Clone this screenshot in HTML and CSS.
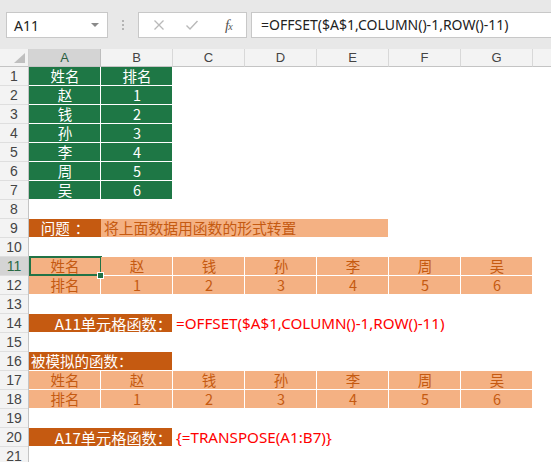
FILE: index.html
```html
<!DOCTYPE html>
<html>
<head>
<meta charset="utf-8">
<link rel="stylesheet" href="styles.css">
</head>
<body>
<div class="topbar">
  <div class="namebox"><span class="nb-text">A11</span><span class="dd"></span></div>
  <div class="sep"><i></i><i></i><i></i></div>
  <div class="fbtns">
    <svg class="ico" width="12" height="12" viewBox="0 0 12 12"><path d="M1.5 1.5 L10.5 10.5 M10.5 1.5 L1.5 10.5" stroke="#b9b9b9" stroke-width="1.3" fill="none"/></svg>
    <svg class="ico" width="14" height="12" viewBox="0 0 14 12"><path d="M1.5 6.5 L5 10 L12.5 2" stroke="#b9b9b9" stroke-width="1.4" fill="none"/></svg>
    <span class="fx">f<sub>x</sub></span>
  </div>
  <div class="finput">=OFFSET($A$1,COLUMN()-1,ROW()-11)</div>
</div>
<div class="sheet">
  <div class="row hdr">
    <div class="corner"><span class="tri"></span></div>
    <div class="ch sel">A</div><div class="ch">B</div><div class="ch">C</div><div class="ch">D</div><div class="ch">E</div><div class="ch">F</div><div class="ch">G</div><div class="ch last"></div>
  </div>
  <div class="row"><div class="rh">1</div><div class="c g">姓名</div><div class="c g">排名</div></div>
  <div class="row"><div class="rh">2</div><div class="c g">赵</div><div class="c g">1</div></div>
  <div class="row"><div class="rh">3</div><div class="c g">钱</div><div class="c g">2</div></div>
  <div class="row"><div class="rh">4</div><div class="c g">孙</div><div class="c g">3</div></div>
  <div class="row"><div class="rh">5</div><div class="c g">李</div><div class="c g">4</div></div>
  <div class="row"><div class="rh">6</div><div class="c g">周</div><div class="c g">5</div></div>
  <div class="row"><div class="rh">7</div><div class="c g">吴</div><div class="c g">6</div></div>
  <div class="row"><div class="rh">8</div></div>
  <div class="row"><div class="rh">9</div><div class="c do q">问题<span class="colon">：</span></div><div class="c lo s4 left">将上面数据用函数的形式转置</div></div>
  <div class="row"><div class="rh">10</div></div>
  <div class="row"><div class="rh rsel">11</div><div class="c lo active">姓名<span class="handle"></span></div><div class="c lo">赵</div><div class="c lo">钱</div><div class="c lo">孙</div><div class="c lo">李</div><div class="c lo">周</div><div class="c lo">吴</div></div>
  <div class="row"><div class="rh">12</div><div class="c lo">排名</div><div class="c lo">1</div><div class="c lo">2</div><div class="c lo">3</div><div class="c lo">4</div><div class="c lo">5</div><div class="c lo">6</div></div>
  <div class="row"><div class="rh">13</div></div>
  <div class="row"><div class="rh">14</div><div class="c do s2 right">A11单元格函数：</div><div class="c red rest">=OFFSET($A$1,COLUMN()-1,ROW()-11)</div></div>
  <div class="row"><div class="rh">15</div></div>
  <div class="row"><div class="rh">16</div><div class="c do s2 left w">被模拟的函数：</div></div>
  <div class="row"><div class="rh">17</div><div class="c lo">姓名</div><div class="c lo">赵</div><div class="c lo">钱</div><div class="c lo">孙</div><div class="c lo">李</div><div class="c lo">周</div><div class="c lo">吴</div></div>
  <div class="row"><div class="rh">18</div><div class="c lo">排名</div><div class="c lo">1</div><div class="c lo">2</div><div class="c lo">3</div><div class="c lo">4</div><div class="c lo">5</div><div class="c lo">6</div></div>
  <div class="row"><div class="rh">19</div></div>
  <div class="row"><div class="rh">20</div><div class="c do s2 right">A17单元格函数：</div><div class="c red rest">{=TRANSPOSE(A1:B7)}</div></div>
  <div class="row"><div class="rh">21</div></div>
</div>
</body>
</html>
```
FILE: styles.css
```css
html, body { margin: 0; padding: 0; background: #fff; }
body { width: 551px; height: 462px; overflow: hidden; font-family: "Noto Sans CJK SC", "Noto Sans", sans-serif; }

.topbar {
  height: 49px; box-sizing: border-box; background: #e8e8e8;
  display: flex; align-items: flex-start; padding: 12px 0 0 6px;
}
.namebox {
  width: 102px; height: 26px; box-sizing: border-box; background: #fff;
  border: 1px solid #c8c8c8; display: flex; align-items: center; justify-content: space-between;
  padding: 0 8px 0 7px;
}
.nb-text { font-family: "Noto Sans", sans-serif; font-size: 14px; color: #222; }
.dd { width: 0; height: 0; border-left: 4px solid transparent; border-right: 4px solid transparent; border-top: 4px solid #8a8a8a; }
.sep { width: 30px; height: 26px; display: flex; flex-direction: column; align-items: center; justify-content: center; gap: 2px; }
.sep i { display: block; width: 2px; height: 2px; background: #b4b4b4; }
.fbtns {
  width: 109px; height: 26px; box-sizing: border-box; background: #fff; border: 1px solid #c8c8c8;
  display: flex; align-items: center; padding: 0 0 0 14px; gap: 0;
}
.fbtns .ico:first-child { margin-right: 20px; }
.fbtns .ico:nth-child(2) { margin-right: 26px; }
.fx { font-family: "Liberation Serif", serif; font-style: italic; font-size: 15px; color: #555; line-height: 1; }
.fx sub { font-size: 10px; vertical-align: 0; margin-left: -1px; }
.finput {
  flex: 1; margin-left: 4px; height: 26px; box-sizing: border-box; background: #fff;
  border: 1px solid #c8c8c8; border-right: none; padding-left: 9px;
  font-family: "Noto Sans", sans-serif; font-size: 14px; line-height: 24px; color: #222; white-space: nowrap;
}

.sheet { display: flex; flex-direction: column; }
.row {
  display: grid; grid-template-columns: 29px repeat(7, 72px) 1fr; height: 19px; flex: none;
}
.row.hdr { height: 18px; }
.corner { box-sizing: border-box; background: #f3f3f3; border-right: 1px solid #d0d0d0; border-bottom: 1px solid #c4c4c4; position: relative; }
.tri { position: absolute; right: 3px; bottom: 3px; width: 0; height: 0; border-left: 11px solid transparent; border-bottom: 10px solid #bfbfbf; }
.ch {
  box-sizing: border-box; background: #f3f3f3; border-right: 1px solid #d8d8d8; border-bottom: 1px solid #c4c4c4;
  font-family: "Liberation Sans", sans-serif; font-size: 13px; color: #444; text-align: center; line-height: 17px;
}
.ch.sel { background: #d4d4d4; color: #2a5d3f; border-right-color: #bdbdbd; }
.ch.last { border-right: none; }
.rh {
  box-sizing: border-box; background: #f3f3f3; border-right: 1px solid #c4c4c4;
  box-shadow: inset 0 -1px 0 #dedede;
  font-family: "Liberation Sans", sans-serif; font-size: 14px; color: #444; text-align: center; line-height: 19px;
}
.rh.rsel { background: #d4d4d4; color: #2a6a44; }

.c {
  box-sizing: border-box; box-shadow: inset -1px -1px 0 #fff;
  text-align: center; font-size: 14.5px; line-height: 18px; white-space: nowrap; position: relative;
}
.g { background: #1e7745; color: #fff; }
.lo { background: #f4b183; color: #c55a11; }
.do { background: #c55a11; color: #fff; }
.s2 { grid-column: span 2; }
.s4 { grid-column: span 4; }
.left { text-align: left; }
.s4.left { padding-left: 3px; font-size: 14.8px; }
.w.left { padding-left: 2px; }
.right { text-align: right; padding-right: 1px; font-size: 15.2px; }
.colon { margin-left: 5px; }
.q { box-shadow: inset 0 -1px 0 #fff; }
.red { color: #f00; font-family: "Noto Sans", sans-serif; text-align: left; padding-left: 3px; font-size: 15.2px; box-shadow: none; }
.rest { grid-column: 4 / -1; }
.active::after {
  content: ""; position: absolute; left: 0; top: -1px; right: -1px; bottom: 0;
  border: 2px solid #217346;
}
.handle { position: absolute; right: -3px; bottom: -3px; width: 5px; height: 5px; background: #217346; border: 1px solid #fff; z-index: 2; }
```
